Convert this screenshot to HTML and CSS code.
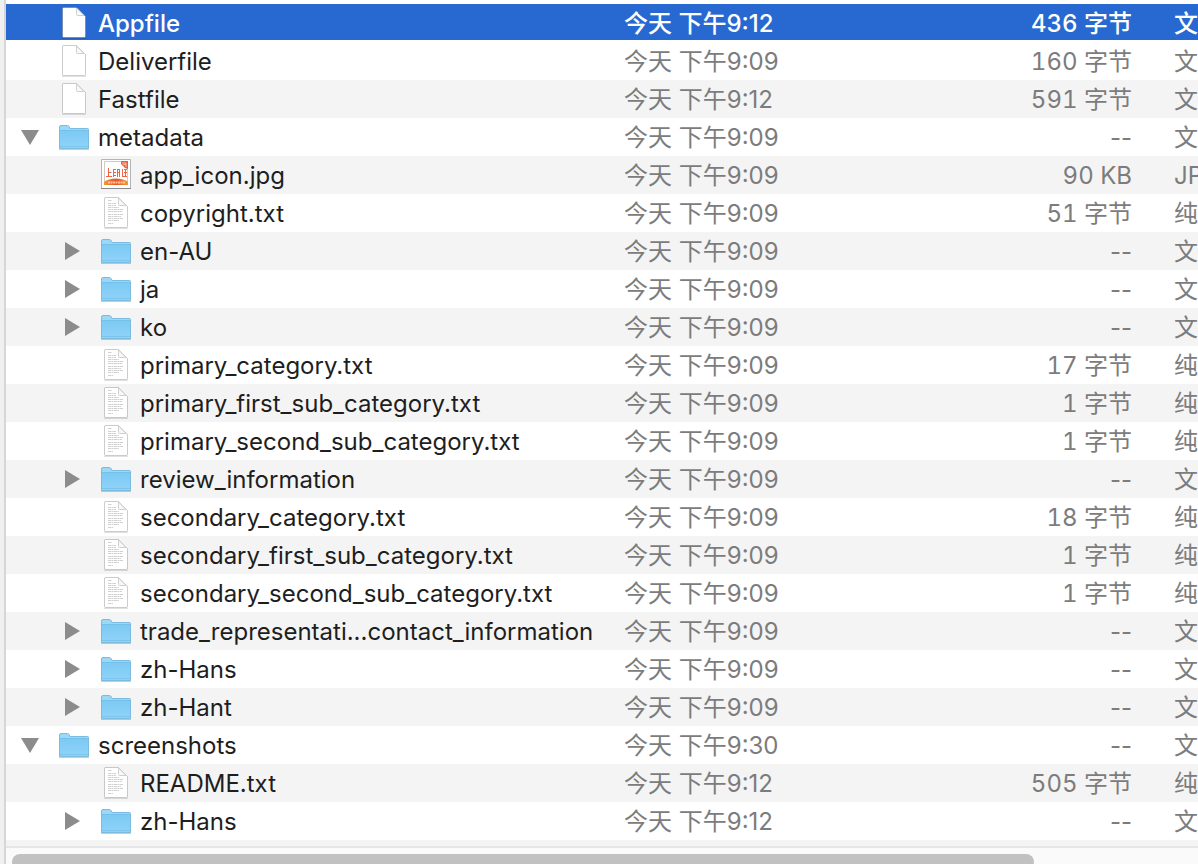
FILE: index.html
```html
<!DOCTYPE html>
<html lang="zh-CN">
<head>
<meta charset="utf-8">
<title>Finder</title>
<link rel="stylesheet" href="styles.css">
</head>
<body>
<svg class="defs" aria-hidden="true">
  <defs>
    <linearGradient id="folderFill" x1="0" y1="0" x2="0" y2="1">
      <stop offset="0" stop-color="#7bc9f3"/><stop offset="1" stop-color="#8fd2f8"/>
    </linearGradient>
    <linearGradient id="sun" x1="0" y1="0" x2="1" y2="0">
      <stop offset="0" stop-color="#f39a35"/><stop offset=".5" stop-color="#e8532f"/><stop offset="1" stop-color="#f39a35"/>
    </linearGradient>
    <symbol id="file" viewBox="0 0 32 34">
      <path d="M4 32.500h24" stroke="#000" stroke-opacity=".12"/>
      <path d="M4.500 2.500Q4.500 1.500 5.500 1.500H18.500L27.500 10.500V30.500Q27.500 31.500 26.500 31.500H5.500Q4.500 31.500 4.500 30.500Z" fill="#fff" stroke="#000" stroke-opacity=".2"/>
      <path d="M18.500 2V8.500Q18.500 9.500 19.500 9.500H26L18.500 2" fill="#f8f8f8" stroke="#d0d0d0"/>
    </symbol>
    <symbol id="text" viewBox="0 0 32 34">
      <use href="#file"/>
      <path d="M8 4.500h4M8 7.500h8M8 9.500h8M8 11.500h11M8 13.500h15M8 15.500h14M8 18.500h15M8 20.500h13M8 22.500h15M8 24.500h11M8 27.500h5" stroke="#aaa" stroke-opacity=".55" stroke-dasharray="3 .5 2 .5"/>
    </symbol>
    <symbol id="folder" viewBox="0 0 32 34">
      <path d="M1 29h30" stroke="#000" stroke-opacity=".2" stroke-width="2"/>
      <path d="M1.500 28V7Q1.500 5.500 3 5.500H9.500Q10.500 5.500 11 6.500L12 8.500H29.500Q30.500 8.500 30.500 9.500V28Q30.500 28.500 30 28.500H2Q1.500 28.500 1.500 28Z" fill="#9bd8f8" stroke="#7bbbe0"/>
      <path d="M2 10h28v18H2z" fill="url(#folderFill)"/>
      <path d="M2 10.500h28M2 26.500h28" stroke="#6db7e2" stroke-opacity=".5"/>
    </symbol>
    <symbol id="picture" viewBox="0 -1 32 34">
      <path d="M1.500 .5h29v29h-29z" fill="#fff" stroke="#b5b5b5"/>
      <path d="M1 29.500h30" stroke="#888"/>
      <path d="M4.500 2.500h23v23h-23z" fill="#fff" stroke="#d2cbc5"/>
      <path d="M21 2h7v8l-3-1-4-4z" fill="#e9603e"/>
      <path d="M22 4h4v4M23 6l3-1" fill="none" stroke="#f6bba6"/>
      <path d="M8.500 9v9M6 17.500h6M9 13.500h2.500M13.500 10v8M13 10.500h3M13 13.500h3M13 16.500h3M17.500 10v8M17 10.500h3M17 13.500h3M19.500 10v8M22.500 10v8M24 10.500h3M24 13.500h3M22 17.500h5M25.500 10v8" fill="none" stroke="#ef6447"/>
      <path d="M4 26v-3Q8 19.500 16 19.500T28 23v3z" fill="url(#sun)"/>
      <path d="M8 23.500h17" stroke="#ffe0a8" stroke-width="2" stroke-dasharray="2 .5" stroke-opacity=".8"/>
    </symbol>
    <symbol id="closed" viewBox="0 0 18 18"><path d="M2 0v18L17 9z" fill="#8c8c8c"/></symbol>
    <symbol id="open" viewBox="0 0 18 18"><path d="M0 2h18L9 17z" fill="#8c8c8c"/></symbol>
  </defs>
</svg>
<main class="browser">
  <div class="list">
    <table class="files">
      <colgroup><col class="col-name"><col class="col-date"><col class="col-size"><col class="col-kind"></colgroup>
      <tbody>
        <tr class="selected"><td><div class="name"><span class="toggle"></span><svg class="icon"><use href="#file"/></svg><span>Appfile</span></div></td><td>今天 下午9:12</td><td class="size">436 字节</td><td>文</td></tr>
        <tr><td><div class="name"><span class="toggle"></span><svg class="icon"><use href="#file"/></svg><span>Deliverfile</span></div></td><td>今天 下午9:09</td><td class="size">160 字节</td><td>文</td></tr>
        <tr><td><div class="name"><span class="toggle"></span><svg class="icon"><use href="#file"/></svg><span>Fastfile</span></div></td><td>今天 下午9:12</td><td class="size">591 字节</td><td>文</td></tr>
        <tr><td><div class="name"><button class="toggle" aria-labelledby="n4" aria-expanded="true"><svg><use href="#open"/></svg></button><svg class="icon"><use href="#folder"/></svg><span id="n4">metadata</span></div></td><td>今天 下午9:09</td><td class="size none">--</td><td>文</td></tr>
        <tr><td><div class="name child"><span class="toggle"></span><svg class="icon"><use href="#picture"/></svg><span>app_icon.jpg</span></div></td><td>今天 下午9:09</td><td class="size">90 KB</td><td>JP</td></tr>
        <tr><td><div class="name child"><span class="toggle"></span><svg class="icon"><use href="#text"/></svg><span>copyright.txt</span></div></td><td>今天 下午9:09</td><td class="size">51 字节</td><td>纯</td></tr>
        <tr><td><div class="name child"><button class="toggle" aria-labelledby="n7" aria-expanded="false"><svg><use href="#closed"/></svg></button><svg class="icon"><use href="#folder"/></svg><span id="n7">en-AU</span></div></td><td>今天 下午9:09</td><td class="size none">--</td><td>文</td></tr>
        <tr><td><div class="name child"><button class="toggle" aria-labelledby="n8" aria-expanded="false"><svg><use href="#closed"/></svg></button><svg class="icon"><use href="#folder"/></svg><span id="n8">ja</span></div></td><td>今天 下午9:09</td><td class="size none">--</td><td>文</td></tr>
        <tr><td><div class="name child"><button class="toggle" aria-labelledby="n9" aria-expanded="false"><svg><use href="#closed"/></svg></button><svg class="icon"><use href="#folder"/></svg><span id="n9">ko</span></div></td><td>今天 下午9:09</td><td class="size none">--</td><td>文</td></tr>
        <tr><td><div class="name child"><span class="toggle"></span><svg class="icon"><use href="#text"/></svg><span>primary_category.txt</span></div></td><td>今天 下午9:09</td><td class="size">17 字节</td><td>纯</td></tr>
        <tr><td><div class="name child"><span class="toggle"></span><svg class="icon"><use href="#text"/></svg><span>primary_first_sub_category.txt</span></div></td><td>今天 下午9:09</td><td class="size">1 字节</td><td>纯</td></tr>
        <tr><td><div class="name child"><span class="toggle"></span><svg class="icon"><use href="#text"/></svg><span>primary_second_sub_category.txt</span></div></td><td>今天 下午9:09</td><td class="size">1 字节</td><td>纯</td></tr>
        <tr><td><div class="name child"><button class="toggle" aria-labelledby="n13" aria-expanded="false"><svg><use href="#closed"/></svg></button><svg class="icon"><use href="#folder"/></svg><span id="n13">review_information</span></div></td><td>今天 下午9:09</td><td class="size none">--</td><td>文</td></tr>
        <tr><td><div class="name child"><span class="toggle"></span><svg class="icon"><use href="#text"/></svg><span>secondary_category.txt</span></div></td><td>今天 下午9:09</td><td class="size">18 字节</td><td>纯</td></tr>
        <tr><td><div class="name child"><span class="toggle"></span><svg class="icon"><use href="#text"/></svg><span>secondary_first_sub_category.txt</span></div></td><td>今天 下午9:09</td><td class="size">1 字节</td><td>纯</td></tr>
        <tr><td><div class="name child"><span class="toggle"></span><svg class="icon"><use href="#text"/></svg><span>secondary_second_sub_category.txt</span></div></td><td>今天 下午9:09</td><td class="size">1 字节</td><td>纯</td></tr>
        <tr><td><div class="name child"><button class="toggle" aria-labelledby="n17" aria-expanded="false"><svg><use href="#closed"/></svg></button><svg class="icon"><use href="#folder"/></svg><span id="n17">trade_representati...contact_information</span></div></td><td>今天 下午9:09</td><td class="size none">--</td><td>文</td></tr>
        <tr><td><div class="name child"><button class="toggle" aria-labelledby="n18" aria-expanded="false"><svg><use href="#closed"/></svg></button><svg class="icon"><use href="#folder"/></svg><span id="n18">zh-Hans</span></div></td><td>今天 下午9:09</td><td class="size none">--</td><td>文</td></tr>
        <tr><td><div class="name child"><button class="toggle" aria-labelledby="n19" aria-expanded="false"><svg><use href="#closed"/></svg></button><svg class="icon"><use href="#folder"/></svg><span id="n19">zh-Hant</span></div></td><td>今天 下午9:09</td><td class="size none">--</td><td>文</td></tr>
        <tr><td><div class="name"><button class="toggle" aria-labelledby="n20" aria-expanded="true"><svg><use href="#open"/></svg></button><svg class="icon"><use href="#folder"/></svg><span id="n20">screenshots</span></div></td><td>今天 下午9:30</td><td class="size none">--</td><td>文</td></tr>
        <tr><td><div class="name child"><span class="toggle"></span><svg class="icon"><use href="#text"/></svg><span>README.txt</span></div></td><td>今天 下午9:12</td><td class="size">505 字节</td><td>纯</td></tr>
        <tr><td><div class="name child"><button class="toggle" aria-labelledby="n22" aria-expanded="false"><svg><use href="#closed"/></svg></button><svg class="icon"><use href="#folder"/></svg><span id="n22">zh-Hans</span></div></td><td>今天 下午9:12</td><td class="size none">--</td><td>文</td></tr>
      </tbody>
    </table>
  </div>
  <div class="scrollbar"><div class="thumb"></div></div>
</main>
</body>
</html>
```
FILE: styles.css
```css
* { box-sizing: border-box; }

body {
  margin: 0;
  height: 100vh;
  overflow: hidden;
  background: #f0f0f0;
  font: 24px/36px Inter, "Noto Sans CJK SC", sans-serif;
  color: #222;
}

.defs { position: absolute; width: 0; height: 0; }

.browser {
  display: flex;
  flex-direction: column;
  height: 100vh;
  margin-left: 4px;
  border-left: 2px solid #d6d6d6;
}

.list {
  flex: 1;
  min-height: 0;
  overflow: hidden;
  padding-top: 4px;
  background: linear-gradient(#fff 50%, #f4f4f4 50%);
}

.files {
  width: 100%;
  table-layout: fixed;
  border-collapse: separate;
  border-spacing: 0;
}

.col-date { width: 328px; }
.col-size { width: 180px; }
.col-kind { width: 66px; }

.files tr { height: 38px; background: #fff; }
.files tr:nth-child(odd) { background: #f4f4f4; }

.files td {
  padding: 2px 0 0;
  color: #7c7c7c;
  white-space: nowrap;
  overflow: hidden;
}

.files td:first-child { color: #1e1e1e; }
.files td:last-child { padding-left: 42px; }
.files .size { text-align: right; font-variant-numeric: tabular-nums; }
.files .none { font-variant-numeric: normal; }

.files .selected td {
  background: linear-gradient(#2869d1 36px, #fff 36px);
  color: #fff;
  font-weight: 500;
}

.name { display: flex; align-items: center; height: 36px; padding-left: 10px; }
.child { padding-left: 52px; }

.toggle {
  display: flex;
  flex: none;
  align-items: center;
  justify-content: center;
  width: 28px;
  height: 34px;
  margin: 0 14px 2px 0;
  padding: 0;
  border: 0;
  background: none;
}

.toggle svg { width: 18px; height: 18px; }

.icon { flex: none; width: 32px; height: 34px; margin: 0 8px 2px 0; }

.scrollbar {
  flex: none;
  height: 18px;
  padding: 6px 164px 0 6px;
  border-top: 2px solid #e6e6e6;
  background: #fafafa;
  overflow: hidden;
}

.thumb { height: 16px; border-radius: 8px; background: #c1c1c1; }
```
